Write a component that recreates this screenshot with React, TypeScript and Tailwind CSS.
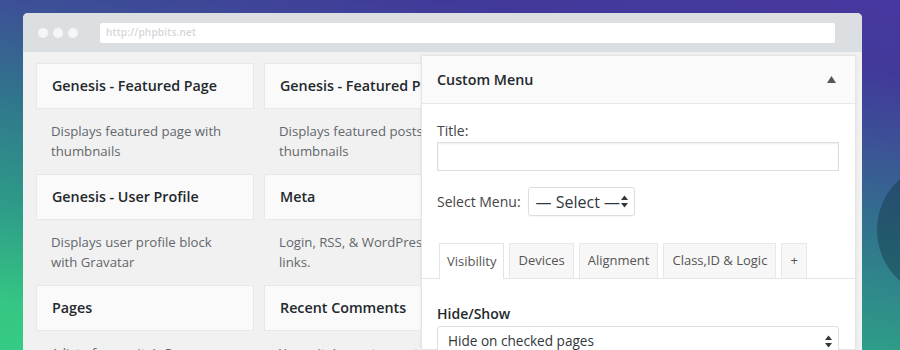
import React from "react";

const FONT = { fontFamily: '"Open Sans", "Noto Sans", sans-serif' };

function UpDown({ className = "" }: { className?: string }) {
  return (
    <svg width="7" height="13" viewBox="0 0 7 13" className={className}>
      <polygon points="3.5,0.5 7,5 0,5" fill="#32373c" />
      <polygon points="0,8 7,8 3.5,12.5" fill="#32373c" />
    </svg>
  );
}

const rows = [
  [
    { t: "Genesis - Featured Page", d: ["Displays featured page with", "thumbnails"] },
    { t: "Genesis - Featured Posts", d: ["Displays featured posts with", "thumbnails"] },
  ],
  [
    { t: "Genesis - User Profile", d: ["Displays user profile block", "with Gravatar"] },
    { t: "Meta", d: ["Login, RSS, & WordPress.org", "links."] },
  ],
  [
    { t: "Pages", d: ["A list of your site\u2019s Pages.", ""] },
    { t: "Recent Comments", d: ["Your site\u2019s most recent comments.", ""] },
  ],
];

export default function App() {
  return (
    <div
      className="relative w-[900px] h-[350px] overflow-hidden pt-[13px] pl-[23px] bg-[linear-gradient(9deg,#36cc85_0%,#35c584_10%,#2e9a88_30%,#30788c_50%,#3c5296_70%,#41399a_85%,#47389f_100%)]"
      style={FONT}
    >
      {/* decorative blob */}
      <div className="absolute left-[877px] top-[162px] w-[136px] h-[136px] rounded-full bg-[#10303c]/40" />

      {/* browser window */}
      <div className="relative w-[839px] h-[337px] rounded-t-[5px] overflow-hidden bg-[#f1f1f1]">
        {/* top bar */}
        <div className="h-[39px] bg-[#dcdfe2] flex items-center">
          <div className="ml-[15px] flex gap-[5px]">
            <span className="block w-[10px] h-[10px] rounded-full bg-[#f5f6f7]" />
            <span className="block w-[10px] h-[10px] rounded-full bg-[#f5f6f7]" />
            <span className="block w-[10px] h-[10px] rounded-full bg-[#f5f6f7]" />
          </div>
          <div className="ml-[22px] w-[735px] h-[20px] bg-white rounded-[2px] flex items-center pl-[6px] text-[10px] font-semibold text-[#d3d6da] tracking-[0.2px]">
            http://phpbits.net
          </div>
        </div>

        {/* widgets grid */}
        <div className="pt-[11px] pl-[13px] grid grid-cols-[218px_218px] gap-x-[10px]">
          {rows.map((row, ri) => (
            <React.Fragment key={ri}>
              {row.map((w, wi) => (
                <div key={wi} className="flex flex-col">
                  <div className="h-[46px] bg-[#fafafa] border border-[#e8e8e8] flex items-center pl-[15px] text-[14.3px] font-semibold text-[#23282d] whitespace-nowrap overflow-hidden">
                    {w.t}
                  </div>
                  <div className="h-[65px] pt-[12px] pl-[15px] text-[13.2px] leading-[20px] text-[#62676c] whitespace-nowrap">
                    <div>{w.d[0]}</div>
                    <div>{w.d[1] || "\u00a0"}</div>
                  </div>
                </div>
              ))}
            </React.Fragment>
          ))}
        </div>

        {/* expanded widget panel */}
        <div className="absolute left-[398px] top-[42px] w-[435px] bottom-0 bg-white border border-[#e5e5e5] shadow-[0_1px_3px_rgba(0,0,0,0.08)]">
          <div className="h-[48px] bg-[#fafafa] border-b border-[#e8e8e8] flex items-center justify-between pl-[15px] pr-[19px]">
            <span className="text-[14.3px] font-semibold text-[#23282d]">Custom Menu</span>
            <svg width="9" height="7" viewBox="0 0 9 7">
              <polygon points="4.5,0 9,7 0,7" fill="#555" />
            </svg>
          </div>

          <div className="px-[15px] pt-[17px]">
            <div className="text-[14px] leading-[20px] text-[#444]">Title:</div>
            <div className="mt-[1px] w-[402px] h-[29px] border border-[#dddddd] bg-white shadow-[inset_0_1px_2px_rgba(0,0,0,0.07)]" />
            <div className="mt-[16px] flex items-center h-[29px]">
              <span className="text-[14px] text-[#444]">Select Menu:</span>
              <div className="ml-[7px] w-[107px] h-[29px] border border-[#dddddd] rounded-[3px] bg-white shadow-[0_1px_1px_rgba(0,0,0,0.04)] flex items-center justify-between pl-[7px] pr-[6px]">
                <span className="text-[16px] text-[#32373c] whitespace-nowrap">— Select —</span>
                <UpDown />
              </div>
            </div>
          </div>

          {/* tabs */}
          <div className="mt-[27px] h-[36px] border-b border-[#e5e5e5] pl-[17px] flex items-end gap-[5px]">
            {["Visibility", "Devices", "Alignment", "Class,ID & Logic", "+"].map((t, i) => (
              <div
                key={t}
                className={
                  i === 0
                    ? "h-[36px] -mb-px px-[7px] flex items-center bg-white border border-b-0 border-[#e5e5e5] text-[13px] text-[#555] whitespace-nowrap"
                    : "h-[35px] px-[8px] flex items-center bg-[#f7f7f7] border border-b-0 border-[#e8e8e8] text-[13px] text-[#555] whitespace-nowrap"
                }
              >
                {t}
              </div>
            ))}
          </div>

          <div className="px-[15px] pt-[25px]">
            <div className="text-[14px] leading-[20px] font-semibold text-[#23282d]">Hide/Show</div>
            <div className="mt-[2px] w-[402px] h-[30px] border border-[#dddddd] rounded-[3px] bg-white flex items-center justify-between pl-[10px] pr-[6px]">
              <span className="text-[13.6px] text-[#32373c]">Hide on checked pages</span>
              <UpDown />
            </div>
          </div>
        </div>
      </div>
    </div>
  );
}
